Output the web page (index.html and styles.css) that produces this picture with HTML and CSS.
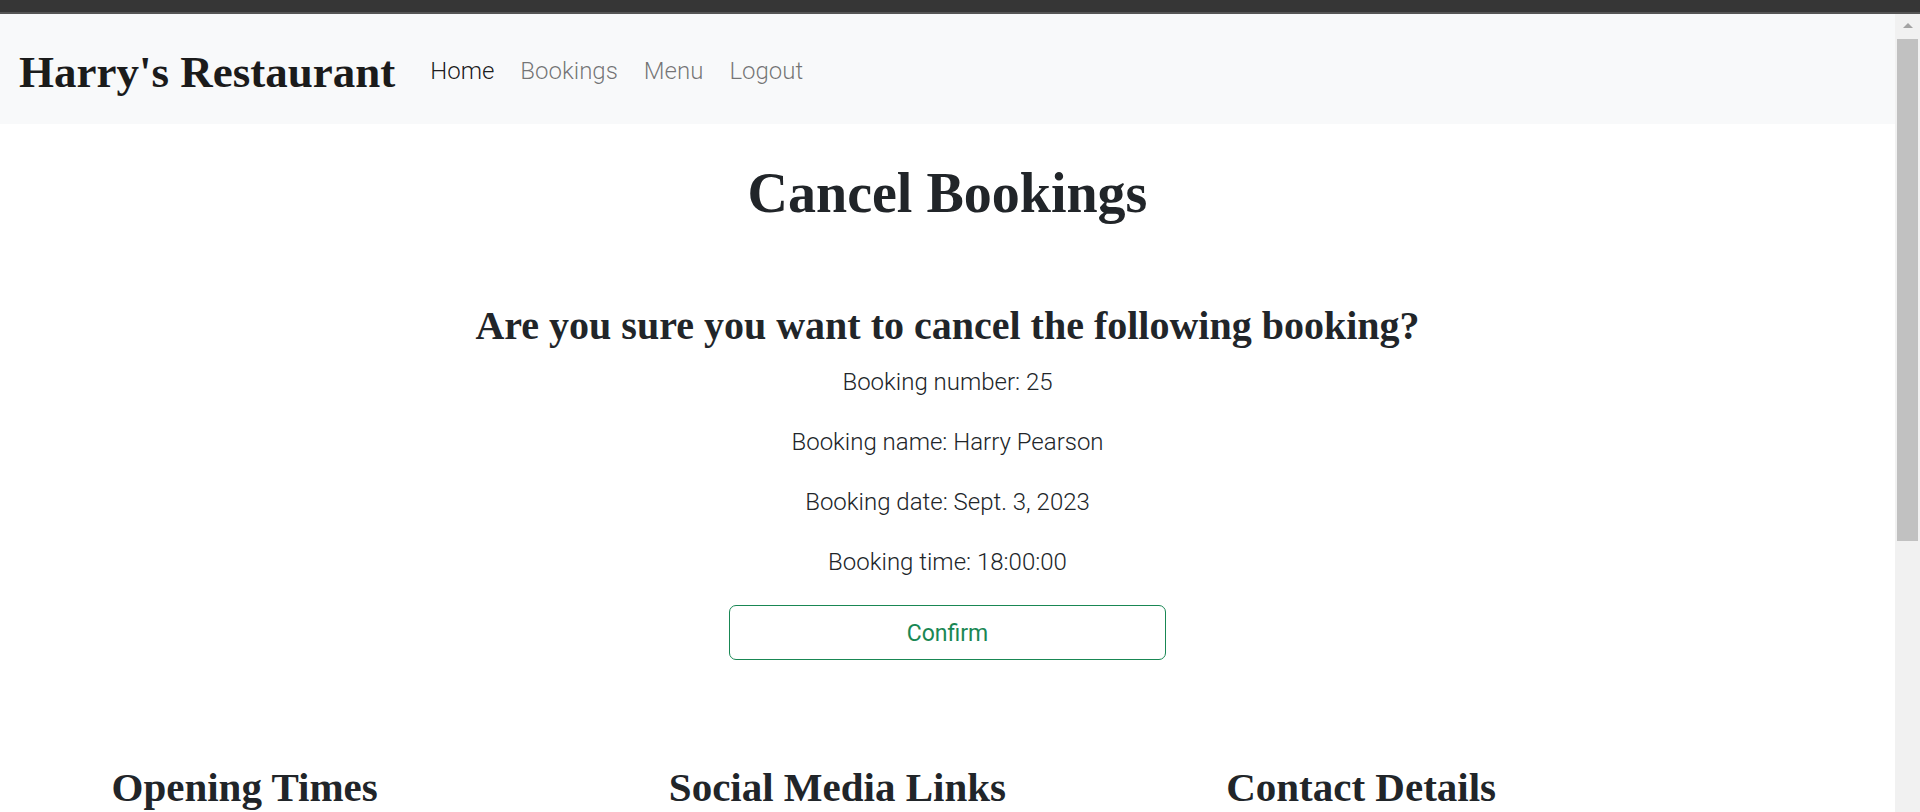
FILE: index.html
```html
<!DOCTYPE html>
<html lang="en">
<head>
<meta charset="utf-8">
<title>Harry's Restaurant - Cancel Bookings</title>
<link rel="stylesheet" href="styles.css">
</head>
<body>
<div class="chrome-top"></div>
<div class="viewport">
  <div class="page">
    <nav class="navbar">
      <a class="brand" href="#">Harry's Restaurant</a>
      <ul class="nav-links">
        <li><a class="nav-link active" href="#">Home</a></li>
        <li><a class="nav-link" href="#">Bookings</a></li>
        <li><a class="nav-link" href="#">Menu</a></li>
        <li><a class="nav-link" href="#">Logout</a></li>
      </ul>
    </nav>
    <main class="content">
      <h1 class="page-title">Cancel Bookings</h1>
      <h2 class="question">Are you sure you want to cancel the following booking?</h2>
      <div class="details">
        <p>Booking number: 25</p>
        <p>Booking name: Harry Pearson</p>
        <p>Booking date: Sept. 3, 2023</p>
        <p>Booking time: 18:00:00</p>
      </div>
      <button class="btn-confirm" type="submit">Confirm</button>
    </main>
    <footer class="footer">
      <div class="footer-col"><h3>Opening Times</h3></div>
      <div class="footer-col"><h3>Social Media Links</h3></div>
      <div class="footer-col"><h3>Contact Details</h3></div>
    </footer>
  </div>
  <div class="scrollbar">
    <div class="scroll-arrow"></div>
    <div class="scroll-thumb"></div>
  </div>
</div>
</body>
</html>
```
FILE: styles.css
```css
* { box-sizing: border-box; }

html, body {
  margin: 0;
  padding: 0;
  height: 100%;
  overflow: hidden;
}

body {
  font-family: Roboto, "Liberation Sans", sans-serif;
  font-weight: 300;
  color: #212529;
  background: #ffffff;
}

.chrome-top {
  height: 14px;
  background: #363636;
  border-bottom: 2px solid #555555;
}

.viewport {
  display: flex;
  height: 798px;
}

.page {
  flex: 1;
  overflow: hidden;
  background: #ffffff;
}

/* Navbar */
.navbar {
  height: 110px;
  background: #f8f9fa;
  display: flex;
  align-items: center;
  padding-left: 19px;
}

.brand {
  font-family: "Liberation Serif", "Times New Roman", serif;
  font-weight: 700;
  font-size: 45px;
  color: #1b1b1b;
  text-decoration: none;
  margin-right: 22px;
  position: relative;
  top: 3px;
}

.nav-links {
  display: flex;
  list-style: none;
  margin: 0;
  padding: 0;
}

.nav-link {
  display: block;
  padding: 0 13px;
  font-size: 24px;
  font-weight: 300;
  color: rgba(0, 0, 0, 0.55);
  text-decoration: none;
  position: relative;
  top: 2px;
}

.nav-link.active {
  color: rgba(0, 0, 0, 0.9);
}

/* Main content */
.content {
  text-align: center;
}

.page-title {
  font-family: "Liberation Serif", "Times New Roman", serif;
  font-weight: 700;
  font-size: 56px;
  line-height: 1.2;
  margin: 36px 0 0;
}

.question {
  font-family: "Liberation Serif", "Times New Roman", serif;
  font-weight: 700;
  font-size: 40px;
  line-height: 1.2;
  margin: 75px 0 0;
}

.details {
  margin-top: 17px;
}

.details p {
  font-size: 24px;
  line-height: 30px;
  margin: 0 0 30px;
}

.details p:last-child {
  margin-bottom: 28px;
}

.btn-confirm {
  display: block;
  margin: 0 auto;
  width: 437px;
  height: 55px;
  background: #ffffff;
  border: 1px solid #198754;
  border-radius: 7px;
  color: #198754;
  font-family: Roboto, "Liberation Sans", sans-serif;
  font-weight: 400;
  font-size: 23px;
  padding-top: 3px;
}

/* Footer */
.footer {
  width: 1672px;
  margin: 103px auto 0;
  display: grid;
  grid-template-columns: repeat(3, 1fr);
}

.footer-col h3 {
  font-family: "Liberation Serif", "Times New Roman", serif;
  font-weight: 700;
  font-size: 41px;
  line-height: 1.2;
  margin: 0;
}

/* Fake browser scrollbar */
.scrollbar {
  width: 25px;
  background: #f1f1f1;
  display: flex;
  flex-direction: column;
  align-items: center;
  padding-top: 9px;
}

.scroll-arrow {
  width: 0;
  height: 0;
  border-left: 5px solid transparent;
  border-right: 5px solid transparent;
  border-bottom: 5px solid #a3a3a3;
  margin-left: 1px;
}

.scroll-thumb {
  width: 21px;
  height: 502px;
  margin-top: 11px;
  background: #c1c1c1;
}
```
